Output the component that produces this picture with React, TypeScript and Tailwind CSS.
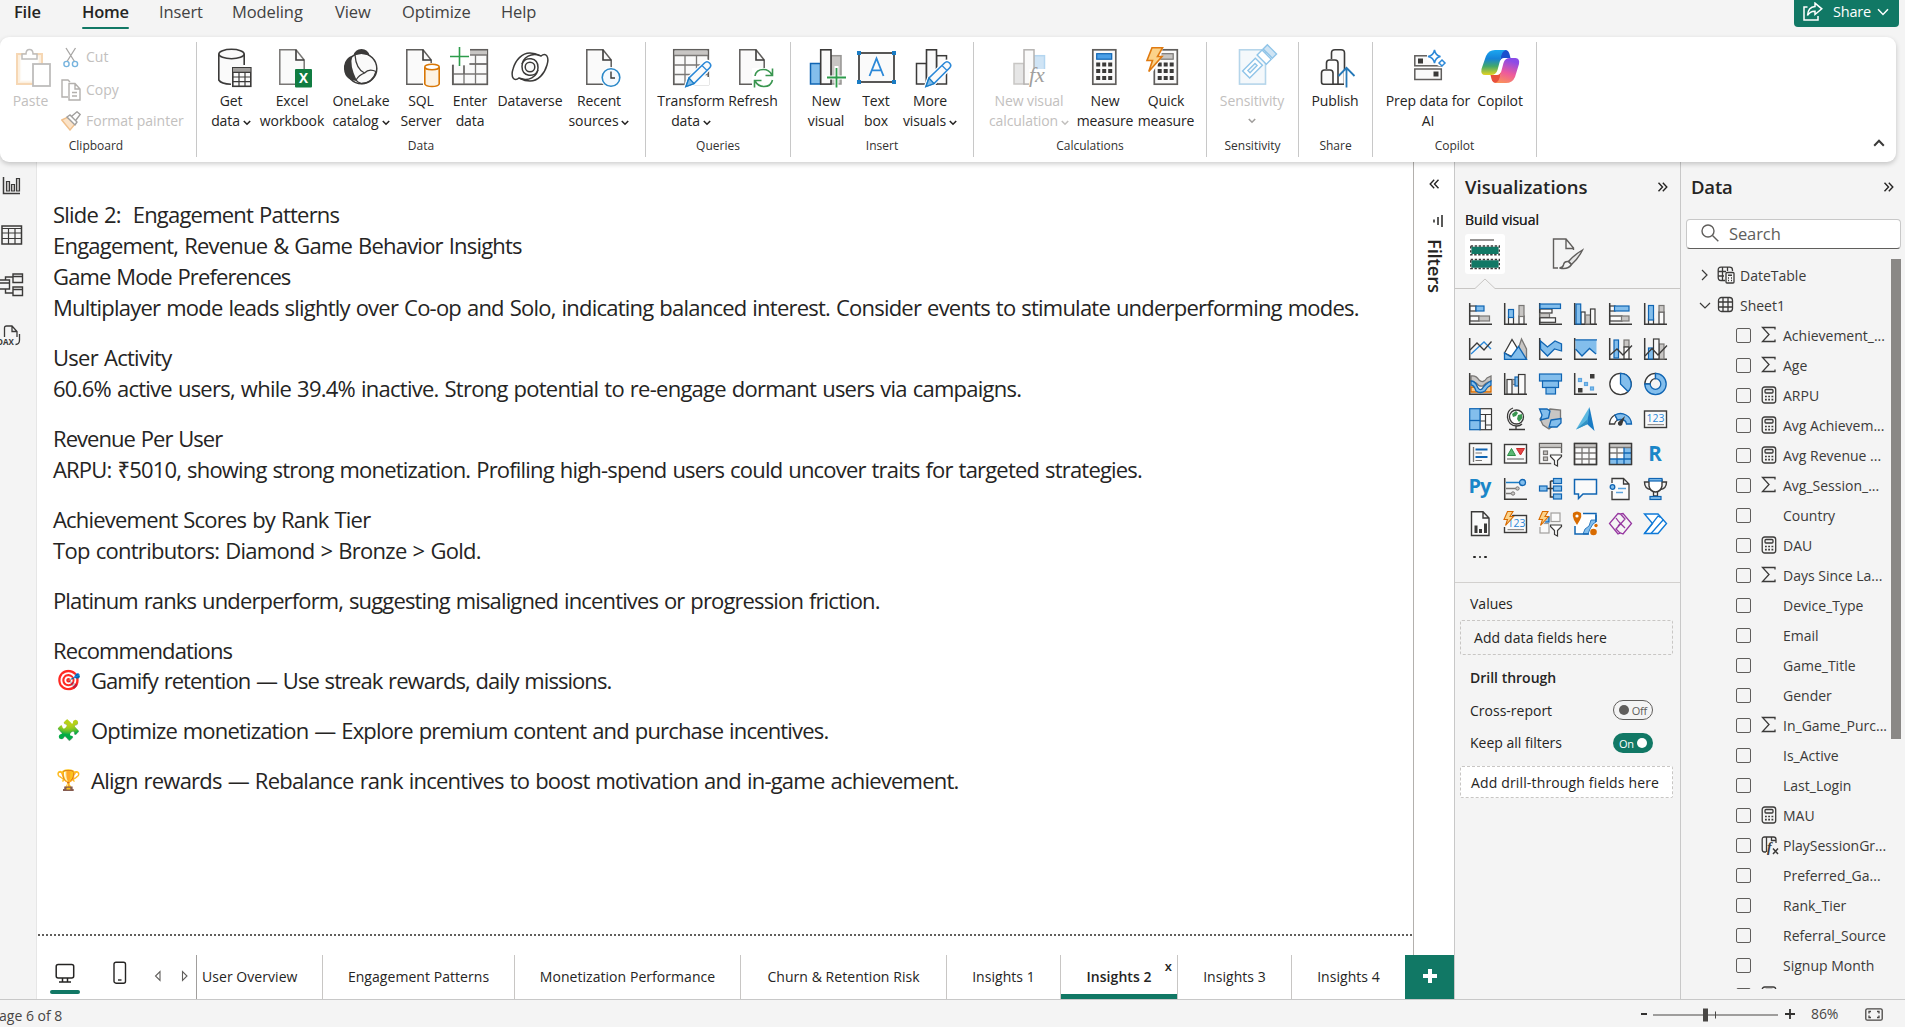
import React from "react";
import type { ReactNode } from "react";

const K = "#3b3a39";
const BS = "#1065b3";
const BF = "#83beec";
const GS = "#797775";
const GF = "#c8c6c4";
const W = "#fafafa";

type BoxProps = { x: number; y: number; w: number; h: number; s?: string; f?: string; t?: number };
const Box = ({ x, y, w, h, s = K, f = W, t = 1.2 }: BoxProps) => (
  <rect x={x} y={y} width={w} height={h} stroke={s} fill={f} strokeWidth={t} />
);
const Line = ({ d, s = K, f = "none", t = 1.3 }: { d: string; s?: string; f?: string; t?: number }) => (
  <path d={d} stroke={s} fill={f} strokeWidth={t} />
);

/* ---------- ribbon icons, 40 x 42 ---------- */

const Page = ({ x = 7, s = "#605e5c" }: { x?: number; s?: string }) => (
  <g transform={`translate(${x} 0)`}>
    <Line d="M.8 2.8H17L25.2 13V37.2H.8Z" s={s} f={W} t={1.5} />
    <Line d="M17 2.8V13H25.2" s={K} t={1.6} />
  </g>
);
const Pencil = ({ x = 14 }: { x?: number }) => (
  <g transform={`translate(${x} 14)`}>
    <Line d="M1 25.5L4 17L19.5 2Q22 -.5 24.5 2Q27 4.5 24.5 7L9 22.5Z" s="#ffffff" f="#ffffff" t={4} />
    <Line d="M1 25.5L4 17L19.5 2Q22 -.5 24.5 2Q27 4.5 24.5 7L9 22.5Z" s="#2b88d8" f={W} t={1.6} />
    <Line d="M1 25.5L4 17L9 22.5Z" s="#1a7cc4" f={BF} t={1.3} />
    <Line d="M17 4.5L22 9.5" s="#2b88d8" t={1.3} />
  </g>
);
const CalcBody = ({ x = 7, blue = true }: { x?: number; blue?: boolean }) => (
  <g transform={`translate(${x} 0)`}>
    <Box x={0.8} y={2.8} w={23} h={34.4} s="#605e5c" t={1.7} />
    <Box x={4.7} y={6.7} w={15} h={5.5} s={blue ? "#1065b3" : "#797775"} f={blue ? "#4ba0e8" : GF} t={1.2} />
    {[15.5, 22, 29].map((y) =>
      [4.2, 10.2, 16.2].map((px) => <rect key={`${px}-${y}`} x={px} y={y} width="4" height="4" fill={K} />),
    )}
  </g>
);

const swirl = "M28 23C25 31 12 30 12 19.500C12 10 22 5 31 9C36 4.500 39.500 10 37 18C34.500 27 28 34 20 34C16 34 13 33 10.500 31.500";

const ribbonIcons: Record<string, ReactNode> = {
  paste: (
    <g opacity="0.55">
      <Box x={3} y={7} w={25} h={30} s="#f0b878" f="#fbe3c4" t={2} />
      <Box x={6.5} y={10} w={18} h={24} s="#fdf5ea" f="#ffffff" />
      <Line d="M8 12V7H12Q12 2.5 15.5 2.5T19 7H23V12Z" s="#8a8886" f="#fff" t={1.5} />
      <Box x={19} y={17} w={17} h={22} s="#8a8886" f="#ffffff" t={1.8} />
    </g>
  ),
  getData: (
    <>
      <Line d="M7.8 7V33Q10 37 19 37H21V20H33V7" s="none" f={W} />
      <Line d="M7.8 7V33Q10 37 20 37.2M33.2 7V18" t={1.6} />
      <ellipse cx="20.5" cy="7" rx="12.7" ry="4.7" stroke={K} strokeWidth="1.6" fill={W} />
      <Box x={21.8} y={20.8} w={18} h={18.5} t={1.6} />
      <rect x="22" y="21" width="17.5" height="4" fill="#a19f9d" />
      <Line d="M21.8 25.3H40M21.8 30H40M21.8 34.7H40M28 25V39M34 25V39" t={1.2} />
    </>
  ),
  excel: (
    <>
      <Page s="#797775" />
      <rect x="23" y="22" width="17" height="18.5" rx="1" fill="#107c41" />
      <text x="31.5" y="36.3" fontSize="13.5" fontWeight="700" fill="#fff" textAnchor="middle" fontFamily="Open Sans">X</text>
    </>
  ),
  onelake: (
    <>
      <circle cx="20.5" cy="21.5" r="15.3" fill={W} stroke={K} strokeWidth="1.5" />
      <path d="M12.5 8.5Q14 2 20.5 2T28.5 8.5Q20 5.5 12.5 8.5Z" fill={K} />
      <path d="M11.500 8.500Q8 18 16 34Q2 33 3 19Q4 11 11.500 8.500Z" fill={K} />
      <Line d="M14 8Q15 22 23.5 26Q28 21 35 24.5Q32 36 20.5 36.5Q16 35 15 33Q18 28 23.5 26" t={1.3} />
    </>
  ),
  sql: (
    <>
      <Page x={5} />
      <path d="M22 16H40V41H22Z" fill="#fff" />
      <Line d="M23.8 20V37Q25 39.5 31 39.5T38.2 37V20" s="#d97706" f="#fdf3e4" t={1.6} />
      <ellipse cx="31" cy="20" rx="7.2" ry="2.7" stroke="#d97706" strokeWidth="1.6" fill="#fff" />
    </>
  ),
  enter: (
    <>
      <Box x={2.8} y={2.8} w={34.5} h={34.5} s="#605e5c" t={1.7} />
      <rect x="12" y="3" width="25" height="5" fill={GF} />
      <Line d="M3 17H37M3 27H37M14 8V37M25.5 8V37M12 8H37" s={GS} t={1.3} />
      <path d="M0 0H20V18H0Z" fill="#fff" />
      <Line d="M9.5 0V19M0 9.5H19" s="#2d9c4b" t={1.6} />
      <Line d="M3 17.5V37.3M20 2.8H37.3M19 17H37M14 19V27" s="#605e5c" t={1.2} />
    </>
  ),
  dataverse: (
    <>
      <Line d={swirl} t={1.5} />
      <g transform="rotate(180 20 20)"><Line d={swirl} t={1.5} /></g>
      <circle cx="20" cy="20" r="4.800" stroke={K} strokeWidth="1.500" fill={W} />
    </>
  ),
  recent: (
    <>
      <Page />
      <circle cx="32" cy="30.5" r="10.5" fill="#fff" />
      <circle cx="32" cy="30.5" r="8.8" fill="#f5faff" stroke="#2b88c8" strokeWidth="1.6" />
      <Line d="M32 24.5V31H36" t={1.4} />
    </>
  ),
  transform: (
    <>
      <Box x={2.8} y={2.8} w={34.5} h={34.5} s="#605e5c" t={1.7} />
      <rect x="3.5" y="3.5" width="33" height="4.5" fill={GF} />
      <Line d="M3 8.5H37M3 18H37M3 27.5H37M14 8V37M25.5 8V37" s={GS} t={1.3} />
      <path d="M24 38V30H38V38Z" fill="#fff" />
      <Pencil />
    </>
  ),
  refresh: (
    <>
      <Page x={6} />
      <path d="M19 21H41V41H19Z" fill="#fff" />
      <Line d="M22 29Q23 22.5 30.5 22.5Q36 22.5 39 28M39.5 21.5V28.5H32.5M39.5 33Q38 39.5 31 39.5Q25 39.5 22 34M21.5 40.5V33.5H28.5" s="#3a9650" t={1.6} />
    </>
  ),
  newVisual: (
    <>
      <Box x={4.5} y={16.5} w={10} h={20.5} s={BS} f={BF} t={1.5} />
      <Box x={25} y={8.7} w={10} h={28.3} s="#979593" f={GF} t={1.5} />
      <Box x={14.7} y={2.8} w={10.3} h={34.3} t={1.6} />
      <Line d="M30.5 19V42M19 30.5H40" s="#ffffff" t={4} />
      <Line d="M30.5 21V40.5M21 30.5H40" s="#2d9c4b" t={1.8} />
    </>
  ),
  textBox: (
    <>
      <Box x={3} y={6} w={35} h={29} f={W} t={1.7} />
      {[[1, 4], [36, 4], [1, 33], [36, 33]].map(([x, y]) => (
        <rect key={`${x}${y}`} x={x} y={y} width="4" height="4" fill="#1a7cc4" />
      ))}
      <Line d="M13.5 29L20.5 11.5L27.5 29M15.7 23.3H25.3" s="#2b88d8" t={1.8} />
    </>
  ),
  moreVisuals: (
    <>
      <Box x={6.5} y={16.5} w={10} h={20.5} t={1.5} />
      <Box x={26.5} y={8.7} w={10} h={28.3} t={1.5} />
      <Box x={16.5} y={2.8} w={10} h={34.3} t={1.6} />
      <Pencil x={15} />
    </>
  ),
  visualCalc: (
    <g>
      <Box x={5} y={16.5} w={10} h={20.5} s="#c8c6c4" f="#e6e6e6" t={1.5} />
      <Box x={25} y={8.7} w={10.5} h={16} s="#b4d6f0" f="#cfe4f5" t={1.5} />
      <Box x={15} y={2.8} w={10} h={34.3} s="#b5b3b1" t={1.5} />
      <path d="M20 22H40V38H20Z" fill="#fff" />
      <text x="20" y="35" fontSize="22" fontStyle="italic" fill="#a19f9d" fontFamily="Liberation Serif">fx</text>
    </g>
  ),
  measure: <CalcBody />,
  quick: (
    <>
      <CalcBody x={7.5} blue={false} />
      <path d="M0 0H17L14 14L6 26H0Z" fill="#fff" />
      <Line d="M6 .8H16.5L11.5 9.5H16L2.8 24.5L6.5 13.5H1Z" s="#e07a10" f="#fbd38a" t={1.6} />
    </>
  ),
  sensitivity: (
    <g transform="translate(2 0)">
      <Box x={5.5} y={2.8} w={26} h={34.3} s="#b5d5ea" f="#f4f8fb" t={1.6} />
      <g transform="rotate(45 27 14)">
        <Box x={20} y={-2} w={13} h={6} s="#8fc4e8" f="#cfe4f4" t={1.4} />
        <Box x={20} y={5.5} w={13} h={7} s="#8fc4e8" f="#fff" t={1.4} />
        <Line d="M21 16H31V34H21ZM24.5 20V30H27.5V20Z" s="#8fc4e8" f="#fff" t={1.4} />
      </g>
    </g>
  ),
  publish: (
    <>
      <Line d="M16.5 12V6Q16.5 2.8 20 2.8H26Q29.5 2.8 29.5 6V37.2" f={W} t={1.6} />
      <Line d="M11.5 22V16Q11.5 13 14.5 13H20Q23 13 23 16V37.2" f="#fff" t={1.6} />
      <path d="M6.5 26Q6.5 23 9.5 23H15Q18 23 18 26V37.2H8.5Q6.5 37.2 6.5 35Z" stroke={K} strokeWidth="1.6" fill={W} />
      <Line d="M18 37.2H30" t={1.6} />
      <Line d="M31.5 22V40" s="#ffffff" t={5} />
      <Line d="M31.5 40.5V21M23.5 29L31.5 20.8L39.5 29" s="#2478b8" t={1.8} />
    </>
  ),
  prep: (
    <>
      <Box x={6.8} y={8.8} w={26.5} h={10} s="#605e5c" t={1.5} />
      <Box x={6.8} y={22} w={26.5} h={10.5} s="#605e5c" t={1.5} />
      <rect x="10" y="11.5" width="5" height="5" fill={K} />
      <rect x="25.5" y="24.5" width="5" height="5" fill={K} />
      <path d="M19 6L26 1L40 10V19H31L19 13Z" fill="#fff" />
      <Line d="M26.5 3Q27.5 8.5 32.5 9.5Q27.5 10.5 26.5 16Q25.5 10.5 20 9.5Q25.5 8.5 26.5 3Z" s="#2b88d8" f="#fff" t={1.5} />
      <Line d="M34 13L37 16L34 19L31 16Z" s="#2b88d8" f="#fff" t={1.5} />
    </>
  ),
  copilot: (
    <>
      <defs>
        <linearGradient id="cpA" x1="0" y1="0" x2="0" y2="1">
          <stop offset="0" stopColor="#1ba7f0" />
          <stop offset=".35" stopColor="#1583d8" />
          <stop offset=".65" stopColor="#43a86a" />
          <stop offset="1" stopColor="#e5d321" />
        </linearGradient>
        <linearGradient id="cpB" x1=".3" y1="0" x2="0" y2="1">
          <stop offset="0" stopColor="#8a4be8" />
          <stop offset=".5" stopColor="#ee5a9c" />
          <stop offset="1" stopColor="#fc9a50" />
        </linearGradient>
      </defs>
      <path d="M22 3H26Q28.5 3.5 29.5 7L30.5 11H24Q21 11 19.5 15Z" fill="#1c4fcd" />
      <path d="M19 36H16Q12.5 36 11.5 32L10.5 28H17Q20 28 21.5 24Z" fill="#e8503c" />
      <path d="M15 3H26Q22.5 4 21.5 8L17.5 23Q16 28 11 28H5Q.5 28 1.5 22L6 9Q8.5 3 15 3Z" fill="url(#cpA)" />
      <path d="M26 36H15Q18.5 35 19.5 31L23.5 16Q25 11 30 11H35.5Q40 11.5 39 17L35 30Q32.5 36 26 36Z" fill="url(#cpB)" />
    </>
  ),
};

const RibbonIcon = ({ name }: { name: string }) => (
  <svg width="40" height="42" viewBox="0 0 40 42" fill="none" className="shrink-0 overflow-visible">
    {ribbonIcons[name]}
  </svg>
);

const Chevron = ({ className = "" }: { className?: string }) => (
  <svg width="8" height="6" viewBox="0 0 8 6" fill="none" className={`inline-block ${className}`}>
    <path d="M.8 1L4 4.200L7.200 1" stroke="currentColor" strokeWidth="1.600" />
  </svg>
);

type Btn = { icon: string; a: string; b?: string; drop?: boolean; w: string; off?: boolean };
const RibbonButton = ({ icon, a, b, drop, w, off }: Btn) => (
  <div className={`flex shrink-0 flex-col items-center ${w} ${off ? "text-[#c2c0be]" : "text-[#252423]"}`}>
    <RibbonIcon name={icon} />
    <div className="mt-[2px] flex flex-col items-center text-[14px] leading-[20px] tracking-[-0.1px] whitespace-nowrap">
      <span>{a}</span>
      {b && (
        <span className="flex items-center">
          {b}
          {drop && <Chevron className="mt-[3px] ml-[3px]" />}
        </span>
      )}
      {!b && drop && <Chevron className="mt-[7px] text-[#a19f9d]" />}
    </div>
  </div>
);

const Group = ({ label, w, pl, items }: { label: string; w: string; pl: string; items: Btn[] }) => (
  <div className={`flex h-[115px] shrink-0 flex-col border-r border-[#c8c8c8] ${w}`}>
    <div className={`flex h-[94px] pt-[5px] ${pl}`}>
      {items.map((it) => (
        <RibbonButton key={it.icon} {...it} />
      ))}
    </div>
    <div className="text-center text-[12px] leading-[20px] whitespace-nowrap text-[#323130]">{label}</div>
  </div>
);

const groups: { label: string; w: string; pl: string; items: Btn[] }[] = [
  {
    label: "Data", w: "w-[449px]", pl: "pl-[4px]",
    items: [
      { icon: "getData", a: "Get", b: "data", drop: true, w: "w-[60px]" },
      { icon: "excel", a: "Excel", b: "workbook", w: "w-[62px]" },
      { icon: "onelake", a: "OneLake", b: "catalog", drop: true, w: "w-[76px]" },
      { icon: "sql", a: "SQL", b: "Server", w: "w-[44px]" },
      { icon: "enter", a: "Enter", b: "data", w: "w-[54px]" },
      { icon: "dataverse", a: "Dataverse", w: "w-[66px]" },
      { icon: "recent", a: "Recent", b: "sources", drop: true, w: "w-[72px]" },
    ],
  },
  {
    label: "Queries", w: "w-[145px]", pl: "pl-[10px]",
    items: [
      { icon: "transform", a: "Transform", b: "data", drop: true, w: "w-[70px]" },
      { icon: "refresh", a: "Refresh", w: "w-[54px]" },
    ],
  },
  {
    label: "Insert", w: "w-[183px]", pl: "pl-[10px]",
    items: [
      { icon: "newVisual", a: "New", b: "visual", w: "w-[50px]" },
      { icon: "textBox", a: "Text", b: "box", w: "w-[50px]" },
      { icon: "moreVisuals", a: "More", b: "visuals", drop: true, w: "w-[58px]" },
    ],
  },
  {
    label: "Calculations", w: "w-[233px]", pl: "pl-[10px]",
    items: [
      { icon: "visualCalc", a: "New visual", b: "calculation", drop: true, w: "w-[90px]", off: true },
      { icon: "measure", a: "New", b: "measure", w: "w-[62px]" },
      { icon: "quick", a: "Quick", b: "measure", w: "w-[60px]" },
    ],
  },
  {
    label: "Sensitivity", w: "w-[92px]", pl: "pl-[10px]",
    items: [{ icon: "sensitivity", a: "Sensitivity", drop: true, w: "w-[70px]", off: true }],
  },
  {
    label: "Share", w: "w-[74px]", pl: "pl-[6px]",
    items: [{ icon: "publish", a: "Publish", w: "w-[60px]" }],
  },
  {
    label: "Copilot", w: "w-[164px]", pl: "pl-[10px]",
    items: [
      { icon: "prep", a: "Prep data for", b: "AI", w: "w-[90px]" },
      { icon: "copilot", a: "Copilot", w: "w-[54px]" },
    ],
  },
];

const menu = [
  { t: "File", w: "w-[68px]" },
  { t: "Home", w: "w-[77px]" },
  { t: "Insert", w: "w-[73px]" },
  { t: "Modeling", w: "w-[103px]" },
  { t: "View", w: "w-[67px]" },
  { t: "Optimize", w: "w-[99px]" },
  { t: "Help", w: "w-[60px]" },
];

const Header = () => (
  <header className="flex h-[37px] shrink-0 items-start justify-between pl-[14px] text-[16.5px] text-[#424242]">
    <nav className="flex">
      {menu.map((m) => (
        <div key={m.t} className={`${m.w} flex flex-col items-start`}>
          <div className="flex flex-col">
            <span
              className={`h-[27px] leading-[24px] ${m.t === "Home" || m.t === "File" ? "font-semibold tracking-[-0.2px] text-[#252423]" : "tracking-[-0.1px]"}`}
            >
              {m.t}
            </span>
            {m.t === "Home" && <span className="h-[2px] rounded bg-[#117865]" />}
          </div>
        </div>
      ))}
    </nav>
    <button className="mr-[6px] flex h-[27px] w-[105px] items-center rounded-b-[4px] bg-[#117865] pl-[9px] text-[14.5px] leading-none text-white">
      <svg width="20" height="19" viewBox="0 0 20 19" fill="none" stroke="#fff" strokeWidth="1.5" className="-mt-[4px]">
        <path d="M4.5 5H1V18H15V14" />
        <path d="M12 1.2L18.8 6.8L12 12.5V9.2Q7 9 4.5 13.5Q5 5 12 4.5Z" />
      </svg>
      <span className="-mt-[3px] ml-[10px] tracking-[-0.2px]">Share</span>
      <svg width="12" height="8" viewBox="0 0 12 8" fill="none" stroke="#fff" strokeWidth="1.5" className="-mt-[3px] ml-[6px]">
        <path d="M1 1.2L6 6.5L11 1.2" />
      </svg>
    </button>
  </header>
);

const Ribbon = () => (
  <div className="relative z-10 flex h-[125px] w-[1896px] shrink-0 rounded-[9px] bg-white pt-[5px] shadow-[0_2px_5px_rgba(0,0,0,0.2)]">
    <div className="flex h-[115px] w-[197px] shrink-0 flex-col border-r border-[#c8c8c8]">
      <div className="flex h-[94px] text-[14px] leading-[20px] text-[#c2c0be]">
        <div className="flex w-[61px] flex-col items-center pt-[5px]">
          <div className="ml-[6px]"><RibbonIcon name="paste" /></div>
          <span className="mt-[2px]">Paste</span>
        </div>
        <div className="flex flex-col">
          <div className="flex h-[31px] items-center gap-[5px]">
            <svg width="20" height="22" viewBox="0 0 20 22" fill="none" opacity=".75">
              <path d="M5 2L13.5 15.5M14.5 2L6 15.5" stroke="#8a8886" strokeWidth="1.3" />
              <circle cx="5.5" cy="18" r="2.6" stroke="#4a9bd4" strokeWidth="1.4" />
              <circle cx="14" cy="18" r="2.6" stroke="#4a9bd4" strokeWidth="1.4" />
            </svg>
            <span>Cut</span>
          </div>
          <div className="mt-[1px] flex h-[32px] items-center gap-[5px]">
            <svg width="20" height="22" viewBox="0 0 20 22" fill="none" stroke="#b3b0ad" strokeWidth="1.4">
              <path d="M7 18H1V1H7L9 3" />
              <path d="M8 4.5H14L19 10V21H8Z M14 4.5V10H19M11 13.5H16M11 17H16" />
            </svg>
            <span>Copy</span>
          </div>
          <div className="mt-px flex h-[30px] items-center gap-[5px]">
            <svg width="20" height="20" viewBox="0 0 20 20" fill="none" strokeWidth="1.4">
              <path d="M.8 9L7 6L14 13L9 19Z" fill="#fbe3c8" stroke="#f0c08c" />
              <path d="M6 6L9 4L16 11L14 14Z M11 5L16 .8L19.2 3.5L15 9" fill="#fff" stroke="#a19f9d" />
            </svg>
            <span className="whitespace-nowrap">Format painter</span>
          </div>
        </div>
      </div>
      <div className="pr-[4px] text-center text-[12px] leading-[20px] text-[#323130]">Clipboard</div>
    </div>
    {groups.map((g) => (
      <Group key={g.label} {...g} />
    ))}
    <div className="flex flex-1 items-end justify-end pr-[11px] pb-[15px]">
      <svg width="12" height="8" viewBox="0 0 12 8" fill="none" stroke={K} strokeWidth="2">
        <path d="M1.2 6.8L6 1.8L10.8 6.8" />
      </svg>
    </div>
  </div>
);

const SideNav = () => (
  <aside className="flex w-[37px] shrink-0 flex-col border-r border-[#e6e6e6] bg-[#f4f4f4]">
    <svg width="24" height="20" viewBox="0 0 24 20" fill="none" stroke={K} className="mt-[14px]">
      <path d="M3.5 1V17.5H20" strokeWidth="1.5" />
      <path d="M6.5 5.5H9.5V15H6.5ZM11.5 8.5H14.5V15H11.5ZM16.5 2.5H19.5V15H16.5Z" strokeWidth="1.2" fill="#c8c6c4" />
    </svg>
    <svg width="24" height="20" viewBox="0 0 24 20" fill="none" stroke={K} className="mt-[29px]">
      <path d="M2 1H21.5V19H2Z" strokeWidth="1.5" />
      <path d="M2 3.5H21.5M2 8H21.5M2 13.5H21.5M8.5 4V19M15 4V19" strokeWidth="1.2" />
    </svg>
    <svg width="24" height="24" viewBox="0 0 24 24" fill="none" stroke={K} strokeWidth="1.400" className="mt-[28px]">
      <path d="M-2 7H9.5V16H-2ZM-2 10H9.5M13 1H22.5V9.5H13ZM13 3.5H22.5M13 14H22.5V22.5H13ZM13 16.5H22.5M5.5 7V4H13M5.5 16V20H13" />
    </svg>
    <svg width="24" height="22" viewBox="0 0 24 22" fill="none" stroke={K} strokeWidth="1.300" className="mt-[28px]">
      <path d="M4.5 12V3Q4.5 1 6.5 1H12L17 6.5V12M12 1V6.5H17M19.500 9V15Q19.500 19.500 15.500 19.500" />
      <text x="-3" y="20" fontSize="8" fontWeight="700" fill={K} stroke="none" fontFamily="Open Sans">DAX</text>
    </svg>
  </aside>
);

const slide: { gap?: boolean; t: string; ls: string; e?: string }[] = [
  { t: "Slide 2:\u00a0 Engagement Patterns", ls: "tracking-[-0.78px]" },
  { t: "Engagement, Revenue & Game Behavior Insights", ls: "tracking-[-0.79px]" },
  { t: "Game Mode Preferences", ls: "tracking-[-0.87px]" },
  { t: "Multiplayer mode leads slightly over Co-op and Solo, indicating balanced interest. Consider events to stimulate underperforming modes.", ls: "tracking-[-0.78px]" },
  { gap: true, t: "User Activity", ls: "tracking-[-0.72px]" },
  { t: "60.6% active users, while 39.4% inactive. Strong potential to re-engage dormant users via campaigns.", ls: "tracking-[-0.75px]" },
  { gap: true, t: "Revenue Per User", ls: "tracking-[-0.95px]" },
  { t: "ARPU: ₹5010, showing strong monetization. Profiling high-spend users could uncover traits for targeted strategies.", ls: "tracking-[-0.81px]" },
  { gap: true, t: "Achievement Scores by Rank Tier", ls: "tracking-[-0.8px]" },
  { t: "Top contributors: Diamond > Bronze > Gold.", ls: "tracking-[-0.72px]" },
  { gap: true, t: "Platinum ranks underperform, suggesting misaligned incentives or progression friction.", ls: "tracking-[-0.86px]" },
  { gap: true, t: "Recommendations", ls: "tracking-[-0.9px]" },
  { t: "Gamify retention — Use streak rewards, daily missions.", ls: "tracking-[-0.95px]", e: "🎯" },
  { gap: true, t: "Optimize monetization — Explore premium content and purchase incentives.", ls: "tracking-[-0.83px]", e: "🧩" },
  { gap: true, t: "Align rewards — Rebalance rank incentives to boost motivation and in-game achievement.", ls: "tracking-[-0.77px]", e: "🏆" },
];

const Canvas = () => (
  <div className="flex flex-1 flex-col border-r border-[#b3b0ad] bg-white">
    <div className="flex-1 pt-[37px] pl-[16px] text-[22px] leading-[31px] whitespace-nowrap text-[#252423]">
      {slide.map((l) => (
        <div key={l.t} className={`flex ${l.t === "Recommendations" ? "h-[30px]" : "h-[31px]"} ${l.gap ? "mt-[19px]" : ""}`}>
          {l.e && <span className="w-[38px] shrink-0 pl-[3px] text-[20px] leading-[30px]">{l.e}</span>}
          <span className={`[word-spacing:1px] ${l.ls}`}>{l.t}</span>
        </div>
      ))}
    </div>
    <div className="mb-[19px] ml-px h-[2px] bg-[repeating-linear-gradient(90deg,#605e5c_0_2px,transparent_2px_4px)]" />
  </div>
);

const DoubleChevron = ({ left }: { left?: boolean }) => (
  <svg width="11" height="10" viewBox="0 0 11 10" fill="none" stroke="#252423" strokeWidth="1.400" className={left ? "rotate-180" : ""}>
    <path d="M1.500 .8L5.500 5L1.500 9.200M5.800 .8L9.800 5L5.800 9.200" />
  </svg>
);

const Filters = () => (
  <div className="flex w-[40px] shrink-0 flex-col items-center bg-white">
    <div className="mt-[17px]"><DoubleChevron left /></div>
    <svg width="12" height="12" viewBox="0 0 12 12" stroke="#252423" strokeWidth="1.5" className="mt-[26px] ml-[8px]">
      <path d="M10 0V12M6 2V10M2 4.5V7.5" />
    </svg>
    <span className="mt-[12px] ml-[1px] text-[18.5px] leading-[24px] font-semibold tracking-[-0.2px] text-[#252423] [writing-mode:vertical-rl]">Filters</span>
  </div>
);

const pageTabs = [
  { t: "User Overview", w: "w-[126px]", p: "pl-[5px]" },
  { t: "Engagement Patterns", w: "w-[192px]", p: "justify-center" },
  { t: "Monetization Performance", w: "w-[226px]", p: "justify-center" },
  { t: "Churn & Retention Risk", w: "w-[206px]", p: "justify-center" },
  { t: "Insights 1", w: "w-[114px]", p: "justify-center" },
  { t: "Insights 2", w: "w-[117px]", p: "justify-center" },
  { t: "Insights 3", w: "w-[114px]", p: "justify-center" },
  { t: "Insights 4", w: "w-[113px]", p: "justify-center" },
];

const PageTabs = () => (
  <div className="flex h-[44px] shrink-0 bg-white text-[14px] text-[#252423]">
    <div className="flex w-[160px] shrink-0 items-start border-r border-[#a19f9d]">
      <div className="ml-[13px] flex w-[30px] flex-col items-center pt-[8px]">
        <svg width="20" height="21" viewBox="0 0 20 21" fill="none" stroke="#252423" strokeWidth="1.5">
          <rect x="1.2" y="1.5" width="17.5" height="13.5" rx="2" />
          <path d="M7.5 15V18.5M12.5 15V18.5M4 19H16" />
        </svg>
        <span className="mt-[6px] h-[4px] w-[30px] rounded-full bg-[#117865]" />
      </div>
      <svg width="14" height="24" viewBox="0 0 14 24" fill="none" stroke="#252423" strokeWidth="1.4" className="mt-[6px] ml-[33px]">
        <rect x="1" y="1.2" width="11.5" height="21" rx="2" />
        <path d="M5 19H8.5" />
      </svg>
      <svg width="8" height="12" viewBox="0 0 8 12" fill="none" stroke="#605e5c" strokeWidth="1.1" className="mt-[15px] ml-[27px]">
        <path d="M6 1.500V10.500L1.500 6Z" />
      </svg>
      <svg width="8" height="12" viewBox="0 0 8 12" fill="none" stroke="#605e5c" strokeWidth="1.1" className="mt-[15px] ml-[19px]">
        <path d="M1.500 1.500V10.500L6 6Z" />
      </svg>
    </div>
    {pageTabs.map((p) => (
      <div key={p.t} className={`relative flex h-[44px] shrink-0 items-center pb-px whitespace-nowrap tracking-[0.050px] ${p.w} ${p.p} ${p.t === "Insights 4" ? "" : "border-r border-[#c8c6c4]"}`}>
        <span className={p.t === "Insights 2" ? "font-semibold" : ""}>{p.t}</span>
        {p.t === "Insights 2" && (
          <>
            <span className="absolute top-[2px] right-[5px] text-[13px] leading-[18px] font-semibold">x</span>
            <span className="absolute inset-x-0 bottom-0 h-[5px] bg-[#117865]" />
          </>
        )}
      </div>
    ))}
    <div className="flex flex-1 items-center justify-center bg-[#117865] pb-[3px]">
      <svg width="14" height="14" viewBox="0 0 14 14" stroke="#fff" strokeWidth="4">
        <path d="M7 0V14M0 7H14" />
      </svg>
    </div>
  </div>
);

/* ---------- visual gallery icons, 24 x 24 ---------- */

const Axis = () => <path d="M1.7 1V22.2H24" stroke={K} strokeWidth="1.5" fill="none" />;
const Bolt = () => <Line d="M4.5 -.5H10L7 4.5H10.5L2.5 13.5L4.5 7.5H1Z" s="#d86b00" f="#fbd38a" t={1.1} />;
const Funnel = () => <Line d="M12.5 13H23.5V14.5L19.5 18.5V24L16.5 22.5V18.5L12.5 14.5Z" f="#fff" t={1.2} />;

const vizIcons: ReactNode[] = [
  <><Axis /><Box x={2} y={4} w={6} h={5} /><Box x={8} y={4} w={8} h={5} s={BS} f={BF} /><Box x={2} y={14} w={9} h={5} /><Box x={11} y={14} w={10.5} h={5} s={GS} f={GF} /></>,
  <><Axis /><Box x={5.5} y={15} w={5} h={7} /><Box x={5.5} y={7.5} w={5} h={8} s={BS} f={BF} /><Box x={16} y={14} w={5} h={8} /><Box x={16} y={3.5} w={5} h={11} s={GS} f={GF} /></>,
  <><Axis /><Box x={2} y={7} w={12} h={4} /><Box x={2} y={11.5} w={9.5} h={4} s={GS} f={GF} /><Box x={2} y={15.8} w={15.5} h={4.5} /><Box x={2} y={2} w={20.5} h={4.5} s={BS} f={BF} /></>,
  <><Axis /><Box x={8} y={10} w={4} h={12} /><Box x={12.5} y={13} w={5} h={9} s={GS} f={GF} /><Box x={17.5} y={7} w={4.5} h={15} /><Box x={3} y={2} w={4.7} h={20} s={BS} f={BF} /></>,
  <><Axis /><Box x={2} y={4} w={5} h={5} /><Box x={6.5} y={4} w={14.5} h={5} s={BS} f={BF} /><Box x={2} y={14} w={12} h={5} /><Box x={13.5} y={14} w={7.5} h={5} s={GS} f={GF} /></>,
  <><Axis /><Box x={5.5} y={17} w={5} h={5} /><Box x={5.5} y={3.5} w={5} h={14.5} s={BS} f={BF} /><Box x={16} y={10} w={5} h={12} /><Box x={16} y={3.5} w={5} h={6.5} s={GS} f={GF} /></>,

  <><Axis /><Line d="M3 17L16 5L23 12" s="#2b88d8" /><Line d="M2 13L9 6L16 13L23.5 4.5" /></>,
  <><Line d="M12 22L18.5 2L23.5 12V22Z" s={GS} f={GF} /><Line d="M1.5 16L9 2.5L16 14L10 20Z" f="#fff" /><Line d="M1.5 22.3V16L8 20L15.5 9.5L23.5 22.3Z" s={BS} f={BF} /></>,
  <><Axis /><Line d="M2.5 4L9.5 10L17 4L23.5 7V14L16.5 12L9.5 19L2.5 12Z" s={BS} f={BF} /></>,
  <><Axis /><Line d="M2.5 3H23.5V17L16.500 11.500L9 19L2.5 12Z" s="none" f={BF} /><Line d="M2.5 12L9 19L16.5 11.5L23 17M2 2.8H24" s={BS} /></>,
  <><Axis /><Box x={6} y={3} w={4.5} h={18} s={BS} f={BF} /><Box x={16} y={3} w={5} h={7} s={GS} f={GF} /><Box x={16} y={10} w={5} h={12} /><Line d="M2 18L9 12L15 18L24 8.5" /></>,
  <><Axis /><Box x={5.5} y={11} w={5} h={11} s={BS} f={BF} /><Box x={16} y={7} w={5} h={15} s={GS} f={GF} /><Box x={10.5} y={2} w={5.5} h={20} /><Line d="M2 19L9 11.5L15 18L24 8.5" /></>,

  <><Line d="M3 15H9L12 19L17 14H23V20H3Z" s="#d86b00" f="#fbc98a" /><Line d="M3 4Q8 3 11 8Q15 12 19 6L23 4V9Q17 11 15 14Q11 15 8 11L3 9Z" s={GS} f={GF} /><Line d="M3 9Q7 9 9 14T14 17Q17 12 23 9V13Q19 15 17 19Q12 22 8 19Q6 13 3 13Z" s={BS} f={BF} /><Axis /></>,
  <><Axis /><Box x={4} y={7.5} w={5} h={14.5} /><Box x={9.5} y={7.5} w={3} h={5} s={GS} f={GF} /><Box x={12} y={5} w={3.5} h={9} s={BS} f={BF} /><Box x={15.5} y={2.5} w={6.5} h={19.5} /></>,
  <><Box x={1.5} y={2} w={22} h={7} s={BS} f={BF} /><Box x={4.5} y={9} w={16} h={6.5} s={BS} f={BF} /><Box x={8} y={15.5} w={9.5} h={6.5} s={BS} f={BF} /></>,
  <><Axis /><rect x="17" y="2" width="4.5" height="4.5" fill={K} /><rect x="5" y="16" width="4.5" height="4.5" fill={K} /><Box x={5.5} y={6.5} w={3} h={3} s="#5ba4df" f={BF} /><Box x={11.5} y={10.5} w={3} h={3} s="#5ba4df" f={BF} /><Box x={17.5} y={15} w={3} h={3} s="#5ba4df" f={BF} /></>,
  <><circle cx="12.5" cy="12" r="10.7" stroke={K} fill="#fff" strokeWidth="1.3" /><Line d="M12.5 1.3V12L20 19.5A10.7 10.7 0 0 0 12.5 1.3Z" s={BS} f={BF} /></>,
  <><circle cx="12.5" cy="12" r="8" stroke={BF} fill="none" strokeWidth="5" /><Line d="M1.8 12A10.7 10.7 0 0 1 12.5 1.3V6.7A5.3 5.3 0 0 0 7.2 12Z" f="#fff" /><Line d="M12.5 1.3A10.7 10.7 0 1 1 1.8 12H7.2A5.3 5.3 0 1 0 12.5 6.7Z" s={BS} f={BF} /></>,

  <><Box x={12} y={1.7} w={11.5} h={21} /><Line d="M12 7.5H23.5M12 14H17.5M17.5 7.5V22.5M17.5 18H23.5" t={1.2} /><Box x={1.7} y={1.7} w={10.3} h={21} s={BS} f={BF} /><Line d="M1.7 13.5H12" s={BS} /></>,
  <><circle cx="13.5" cy="10" r="7" stroke={K} fill="#fff" strokeWidth="1.3" /><path d="M9 7L13 4L15 6L13 9L10 10ZM15 8L19 7L19.5 11L16 15L14 12Z" fill="#3a9650" /><Line d="M10 1Q4 3 4.5 10.5Q5.5 19 14 19Q17 19 19 17M13 19V22.5M6 22.5H22" /></>,
  <><Line d="M12 2L22.5 3V12L17 17L11 22L5 18L2 12Z" s={GS} f={GF} /><Line d="M1.5 2H9L12 4L10.5 11L2.5 13L4 8Z" s={BS} f={BF} /><Line d="M13 13L23 11.5V16L19 20L11 20Z" s={BS} f={BF} /></>,
  <><path d="M16.5 0L3 22.5L14.5 17Z" fill="#5bb8e0" /><path d="M16.5 0L14 17L21.5 24Z" fill="#1a7cc4" /><path d="M3 22.5L14.5 12.5L14 17.5Z" fill="#3292c4" /></>,
  <><Line d="M1.5 17A11 10.5 0 0 1 7 8L9.5 13Q7 14.5 6.5 17Z" f="#fff" /><Line d="M7 8A11 10.5 0 0 1 23.5 17H18.5Q18 12.5 12.5 12.5L9.5 13Z" s={BS} f={BF} /><path d="M17 9L14.5 16.5A2.3 2.3 0 1 1 11 14.5Z" fill={K} /></>,
  <><Box x={1.5} y={4} w={22} h={16.5} t={1.4} /><Line d="M4.5 17.7H21" s={GS} t={1} /><text x="12.5" y="15" fontSize="10.5" textAnchor="middle" fill="#2b88d8" fontFamily="Open Sans">123</text></>,

  <><Box x={1.5} y={1.5} w={22} h={21} t={1.4} /><Line d="M5.5 5V20" s={GS} /><Line d="M7.5 7.5H19.5M7.5 15H19.5" s={BS} t={2.2} /><Line d="M7.5 11H14M7.5 18.5H14" s={GS} t={1.2} /></>,
  <><Box x={1.5} y={2.5} w={22} h={18.5} t={1.4} /><path d="M4.5 13.5L8.5 6.5L12.5 13.5Z" fill="#5cb874" stroke="#2d8c45" /><path d="M13.5 6.5H21.5L17.5 13Z" fill="#e64545" stroke="#c92a2a" /><Line d="M4 17H21" s={GS} t={1.2} /></>,
  <><Box x={1.5} y={1.5} w={22} h={20} s="#605e5c" t={1.4} /><rect x="2" y="2" width="21" height="3.5" fill={GF} /><Line d="M1.5 5.5H23.5" s={GS} /><Box x={5.5} y={9} w={4} h={3.5} s={GS} f={GF} /><Box x={5.5} y={15} w={4} h={3.5} s={GS} f={GF} /><path d="M11 11H25V25H14Z" fill="#f4f4f4" /><Funnel /></>,
  <><Box x={1.5} y={1.5} w={22} h={21} t={1.4} /><rect x="2" y="2" width="21" height="3.5" fill={GF} /><Line d="M1.5 5.5H23.5M1.5 11H23.5M1.5 17H23.5M9 5.5V22M16 5.5V22" s={GS} /><Box x={1.5} y={1.5} w={22} h={21} f="none" t={1.4} /></>,
  <><Box x={1.5} y={1.5} w={22} h={21} /><rect x="2" y="2" width="21" height="3.5" fill={GF} /><path d="M16 5.5H23.5V22.5H1.5V17H16Z" fill={BF} /><Line d="M1.5 5.5H23.5M1.5 11H16M9 5.5V17" s={GS} /><Line d="M16 5.5V22M2 17H23.5M9 17V22M16 11H23" s={BS} /><Box x={1.5} y={1.5} w={22} h={21} f="none" t={1.4} /></>,
  <text x="12" y="19" fontSize="20.5" fontWeight="700" textAnchor="middle" fill="#1a86c8" fontFamily="Open Sans">R</text>,

  <text x="12" y="16" fontSize="20" fontWeight="700" textAnchor="middle" fill="#1a86c8" fontFamily="Open Sans" textLength="23">Py</text>,
  <><Axis /><Line d="M3 5.5H17" s="#1a7cc4" t={1.5} /><circle cx="19.5" cy="5.5" r="3" fill={BF} stroke={BS} strokeWidth="1.3" /><Line d="M3 11.5H13M3 16.5H8" s={GS} /><circle cx="14.5" cy="11.5" r="1.7" fill={GF} stroke={GS} /><circle cx="10" cy="16.5" r="1.7" fill={GF} stroke={GS} /></>,
  <><Line d="M9 11.5H15M12.5 4V20H15M12.5 4H15" t={1.6} /><Box x={1.5} y={9} w={7.5} h={5} s={BS} f={BF} /><Box x={15.5} y={1.5} w={8} h={5} s={BS} f={BF} /><Box x={15.5} y={9} w={8} h={5} s={BS} f={BF} /><Box x={15.5} y={17} w={8} h={5} s={BS} f={BF} /></>,
  <Line d="M1.5 2.5H23.5V17H10L5.5 21.5V17H1.5Z" s={BS} f={W} t={1.5} />,
  <><Line d="M4 6V1.5H15.5L21 7V22.5H4V14M15.5 1.5V7H21" t={1.3} f="#fbfbfb" /><Line d="M10 11.5H18M8 15.5H15" s="#5ba4df" /><circle cx="4.5" cy="10" r="2.3" fill={BF} stroke={BS} strokeWidth="1.3" /></>,
  <><Line d="M6 5H1.5Q1.5 12 8 12.5M19 5H23.5Q23.5 12 17 12.5" t={1.4} /><Line d="M6 3V9Q7 14.5 12.5 15Q18 14.5 19 9V3Z" f="#fff" t={1.4} /><Line d="M10.5 15V19H14.5V15" /><Box x={6} y={1.5} w={13} h={2.5} s={BS} f={BF} /><Box x={7} y={19.5} w={11} h={3} s={BS} f={BF} /></>,

  <><Line d="M3.5 -.3H15L21 6V23.5H3.5ZM15 0V6H21" f={W} t={1.4} /><path d="M6.5 13.5H9.5V21H6.5ZM11 17H14V21H11ZM16 11.5H19V21H16Z" fill={K} /></>,
  <><Box x={1.5} y={3.5} w={22} h={17} t={1.4} /><Line d="M4.5 17.7H21" s={GS} t={1} /><text x="13.5" y="15" fontSize="10.5" textAnchor="middle" fill="#2b88d8" fontFamily="Open Sans">123</text><path d="M0 -1H11L8 6L3 15H0Z" fill="#f4f4f4" /><Bolt /></>,
  <><Box x={2} y={11.5} w={9} h={9.5} s="#a19f9d" /><Box x={13} y={1} w={9} h={8.5} s="#a19f9d" /><Box x={7} y={5} w={4} h={5} s={BS} f={BF} /><path d="M11 11H25V25H14Z" fill="#f4f4f4" /><Funnel /><path d="M0 -1H11L10 6L3 15H0Z" fill="#f4f4f4" /><Bolt /></>,
  <><path d="M10 1.500H23V22H2V13Z" fill="#fff" /><path d="M23 3V8L18 8L16 14L12 17L10 22H15L17 17L20 12L23 10Z" fill={BF} stroke={BS} strokeWidth=".8" /><Line d="M2 14V22H16M10 1.5H23V10" s={BS} t={1.5} /><path d="M0 1Q4 -2 8 1Q9 5 7 8L4 13L1 8Q-1 4 0 1Z" fill="#d86b00" /><circle cx="4" cy="4" r="1.6" fill="#fff" /><circle cx="20.5" cy="20" r="3.3" fill="#d86b00" /><circle cx="23" cy="13.5" r="1.7" fill="#d86b00" /></>,
  <><Line d="M12.5 2L15 1.5L23.5 11.5L15 22L12.5 21L10 22L1.5 11.5L10 1.5Z M8 6Q10 9 12.5 11.5L17 16M12.5 2L17 7L8 17L12.5 21.5M12.5 11.5L10 14" s="#9637a0" t={1.3} /></>,
  <><Line d="M1.5 2H15L23.5 11.5L15 21.5H1.5L9.5 11.5Z" s="#0f7ad8" f="#fff" t={1.4} /><Line d="M1.5 21.5L15 4L17.5 5.5M8 21.5L20.5 7.5" s="#0f7ad8" t={1.3} /></>,
];

const Toggle = ({ on }: { on?: boolean }) =>
  on ? (
    <span className="flex h-[20px] w-[40px] items-center justify-between rounded-full bg-[#117865] pr-[6px] pl-[6px] text-[11px] leading-none tracking-[-0.2px] text-white">
      On <span className="size-[10px] rounded-full bg-white" />
    </span>
  ) : (
    <span className="flex h-[20px] w-[40px] items-center justify-between rounded-full border border-[#605e5c] pr-[5px] pl-[5px] text-[11px] leading-none tracking-[-0.2px] text-[#605e5c]">
      <span className="size-[10px] rounded-full bg-[#605e5c]" /> Off
    </span>
  );

const Visualizations = () => (
  <section className="flex w-[226px] shrink-0 flex-col border-l border-[#c8c8c8] bg-[#f4f4f4] text-[14px] text-[#252423]">
    <div className="flex h-[50px] items-center justify-between pr-[12px] pl-[10px]">
      <h2 className="text-[18.5px] font-semibold">Visualizations</h2>
      <DoubleChevron />
    </div>
    <div className="h-[22px] pl-[10px] leading-[15px] font-medium [text-shadow:0_0_0.4px_#252423]">Build visual</div>
    <div className="flex pl-[10px]">
      <div className="flex size-[40px] items-center justify-center rounded-[3px] bg-white">
        <svg width="30" height="31" viewBox="0 0 30 31" fill="none">
          <path d="M0 1H24" stroke="#605e5c" strokeWidth="1.3" />
          <rect x="1" y="7" width="28" height="8.5" fill="#117865" />
          <rect x="1" y="20.5" width="28" height="9" fill="#117865" />
          <path d="M.7 7H29.3V15.7H.7ZM.7 20.5H29.3V29.5H.7Z" stroke="#fff" strokeWidth="1.4" />
          <path d="M.7 7H29.3V15.7H.7ZM.7 20.5H29.3V29.5H.7Z" stroke="#3b3a39" strokeWidth="1.4" strokeDasharray="2.4 1.6" />
        </svg>
      </div>
      <svg width="32" height="32" viewBox="0 0 32 32" fill="none" stroke="#605e5c" strokeWidth="1.4" className="mt-[4px] ml-[47px]">
        <path d="M6 30H1.5V1H14L21.5 10V12M14 1V10.5H21.5" />
        <path d="M30.5 12Q22 17 16.5 23.5L19.5 26.5Q26 21 30.5 12Z" fill="#e6e6e6" />
        <path d="M16.5 23.5Q12 23 11.5 27Q11 29.5 7.5 30Q16 32 19.5 26.5Z" />
      </svg>
    </div>
    <svg width="225" height="12" viewBox="0 0 225 12" fill="none" stroke="#c8c6c4" className="mt-[4px] shrink-0">
      <path d="M0 10.5H20L30 1L40 10.5H225" />
    </svg>
    <div className="mt-[12px] grid w-[199px] grid-cols-[repeat(6,24px)] gap-[11px] pl-[13px]">
      {vizIcons.map((ic, i) => (
        <svg key={i} width="24" height="24" viewBox="0 0 24 24" fill="none" className="overflow-visible">
          {ic}
        </svg>
      ))}
    </div>
    <div className="mt-[16px] flex h-[10px] items-center gap-[3px] pl-[18px]">
      <span className="size-[2.5px] rounded-full bg-[#252423]" />
      <span className="size-[2.5px] rounded-full bg-[#252423]" />
      <span className="size-[2.5px] rounded-full bg-[#252423]" />
    </div>
    <div className="mt-[20px] border-t border-[#d2d0ce] px-[5px] pt-[11px]">
      <div className="pl-[10px] leading-[20px]">Values</div>
      <div className="mt-[6px] flex h-[35px] w-[213px] items-center rounded-[2px] border border-dashed border-[#c8c6c4] pl-[13px] pb-px tracking-[0.1px]">Add data fields here</div>
      <div className="mt-[13px] pl-[10px] leading-[20px] font-semibold">Drill through</div>
      <div className="mt-[12px] flex h-[20px] items-center justify-between pr-[22px] pl-[10px]">
        Cross-report <Toggle />
      </div>
      <div className="mt-[13px] flex h-[20px] items-center justify-between pr-[22px] pl-[10px]">
        <span className="-mt-[2px]">Keep all filters</span> <Toggle on />
      </div>
      <div className="mt-[13px] flex h-[32px] w-[213px] items-center rounded-[2px] border border-dashed border-[#c8c6c4] bg-white pl-[10px] whitespace-nowrap tracking-[0.15px]">Add drill-through fields here</div>
    </div>
  </section>
);

/* ---------- data pane ---------- */

const fields: [string, "" | "sum" | "calc" | "fx"][] = [
  ["Achievement_...", "sum"], ["Age", "sum"], ["ARPU", "calc"], ["Avg Achievem...", "calc"], ["Avg Revenue ...", "calc"],
  ["Avg_Session_...", "sum"], ["Country", ""], ["DAU", "calc"], ["Days Since La...", "sum"], ["Device_Type", ""], ["Email", ""],
  ["Game_Title", ""], ["Gender", ""], ["In_Game_Purc...", "sum"], ["Is_Active", ""], ["Last_Login", ""], ["MAU", "calc"],
  ["PlaySessionGr...", "fx"], ["Preferred_Ga...", ""], ["Rank_Tier", ""], ["Referral_Source", ""], ["Signup Month", ""], ["", "calc"],
];

const FieldIcon = ({ kind }: { kind: string }) => (
  <svg width="18" height="18" viewBox="0 0 18 18" fill="none" stroke={K} strokeWidth="1.3" className="shrink-0 overflow-visible">
    {kind === "sum" && <path d="M14 3.5V1.5H1.5L8 8.5L1.5 15.5H14V13.5" />}
    {kind === "calc" && (
      <>
        <rect x="1.2" y="1" width="13.5" height="16" rx="2.5" />
        <rect x="4" y="3.5" width="8" height="3.5" rx="1" />
        <path d="M4 10.5H5.8M7.2 10.5H9M10.5 10.5H12.3M4 13.7H5.8M7.2 13.7H9M10.5 13.7H12.3" strokeWidth="1.7" />
      </>
    )}
    {kind === "fx" && (
      <>
        <path d="M5 16H3.5Q1.2 16 1.2 13.5V3.5Q1.2 1 3.5 1H12.5Q15 1 15 3.5V7M5.5 1V16M10.5 1V4.5H15" />
        <text x="6" y="16" fontSize="14" fontStyle="italic" fontWeight="700" fill={K} stroke="none" fontFamily="Liberation Serif">f</text>
        <path d="M12 12.5L17 18M17 12.5L12 18" strokeWidth="1.5" />
      </>
    )}
  </svg>
);

const TableIcon = ({ calc }: { calc?: boolean }) => (
  <svg width="18" height="18" viewBox="0 0 18 18" fill="none" stroke={K} strokeWidth="1.3" className="shrink-0 overflow-visible">
    {calc ? (
      <>
        <path d="M8 14.5H4Q1.2 14.5 1.2 11.5V4Q1.2 1.2 4 1.2H12.5Q15.5 1.2 15.5 4V5M5.5 1V14.5M10.5 1V5M1 5.5H9M1 10H7" />
        <rect x="9" y="6.5" width="8" height="10.5" rx="1" fill="#f4f4f4" />
        <path d="M11 9.2H15M11 12H12M14 12H15M11 14.5H12M14 14.5H15" strokeWidth="1.5" />
      </>
    ) : (
      <>
        <rect x="1.5" y="1.5" width="14" height="14" rx="3" />
        <path d="M6 1.5V15.5M11 1.5V15.5M1.5 6H15.5M1.5 11H15.5" />
      </>
    )}
  </svg>
);

const DataPane = () => (
  <section className="flex w-[225px] shrink-0 flex-col border-l border-[#c8c8c8] bg-[#f4f4f4] text-[14px] text-[#3b3a39]">
    <div className="flex h-[50px] items-center justify-between pr-[11px] pl-[10px] text-[#252423]">
      <h2 className="text-[18.5px] font-semibold tracking-[-0.2px]">Data</h2>
      <DoubleChevron />
    </div>
    <div className="mt-[7px] ml-[5px] flex h-[30px] w-[215px] shrink-0 items-center gap-[10px] rounded-[4px] border border-[#c8c8c8] border-b-[#605e5c] bg-white pl-[14px] text-[16.5px] tracking-[-0.1px] text-[#605e5c]">
      <svg width="18" height="18" viewBox="0 0 18 18" fill="none" stroke="#605e5c" strokeWidth="1.4" className="-mt-[2px]">
        <circle cx="7" cy="7" r="6" />
        <path d="M11.5 11.5L17.3 17.3" />
      </svg>
      Search
    </div>
    <div className="mt-[10px] flex h-[730px] overflow-hidden">
      <div className="mt-px flex w-[210px] flex-col">
        <div className="flex h-[30px] shrink-0 items-center pl-[20px]">
          <svg width="7" height="12" viewBox="0 0 7 12" fill="none" stroke={K} strokeWidth="1.2"><path d="M1 1L6 6L1 11" /></svg>
          <span className="ml-[9px] flex items-center gap-[5px]"><TableIcon calc />DateTable</span>
        </div>
        <div className="flex h-[30px] shrink-0 items-center pl-[18px]">
          <svg width="12" height="7" viewBox="0 0 12 7" fill="none" stroke={K} strokeWidth="1.2"><path d="M1 1L6 6L11 1" /></svg>
          <span className="ml-[6px] flex items-center gap-[5px]"><TableIcon />Sheet1</span>
        </div>
        {fields.map(([name, kind], i) => (
          <div key={i} className="flex h-[30px] shrink-0 items-center pl-[55px] whitespace-nowrap">
            <span className="size-[15px] shrink-0 rounded-[2px] border border-[#605e5c]" />
            <span className="mr-[4px] ml-[10px] flex"><FieldIcon kind={kind} /></span>
            <span>{name}</span>
          </div>
        ))}
      </div>
      <div className="h-[480px] w-[10px] bg-[#8a8886]" />
    </div>
  </section>
);

const StatusBar = () => (
  <footer className="flex h-[28px] shrink-0 items-center justify-between border-t border-[#c8c8c8] bg-[#f4f4f4] text-[14px] text-[#484644]">
    <span className="mt-[3px] -ml-[1px]">age 6 of 8</span>
    <div className="flex items-center pr-[22px]">
      <span className="mr-[6px] h-[2px] w-[6px] bg-[#323130]" />
      <svg width="126" height="16" viewBox="0 0 126 16" className="mt-[2px]">
        <path d="M0 8H125M62.5 4.5V11.5" stroke="#484644" />
        <rect x="50" y="1.5" width="5" height="13" fill="#484644" />
      </svg>
      <svg width="10" height="10" viewBox="0 0 10 10" stroke="#323130" strokeWidth="1.8" className="ml-[6px]"><path d="M5 0V10M0 5H10" /></svg>
      <span className="ml-[16px] w-[54px] tracking-[-0.1px]">86%</span>
      <svg width="18" height="13" viewBox="0 0 18 13" fill="none" stroke="#484644" strokeWidth="1.3" className="mt-[2px]">
        <rect x=".8" y=".8" width="16.4" height="11.4" rx="1.5" />
        <path d="M4 5.5V3.5H6M12 3.5H14V5.5M14 7.5V9.5H12M6 9.5H4V7.5" />
      </svg>
    </div>
  </footer>
);

export default function App() {
  return (
    <div className="flex h-[1027px] w-[1905px] flex-col overflow-hidden bg-[#f4f4f4] font-['Open_Sans','Noto_Sans','Noto_Color_Emoji',sans-serif]">
      <Header />
      <Ribbon />
      <main className="flex h-[837px] shrink-0">
        <SideNav />
        <div className="flex w-[1417px] shrink-0 flex-col bg-white">
          <div className="flex flex-1">
            <Canvas />
            <Filters />
          </div>
          <PageTabs />
        </div>
        <Visualizations />
        <DataPane />
      </main>
      <StatusBar />
    </div>
  );
}
